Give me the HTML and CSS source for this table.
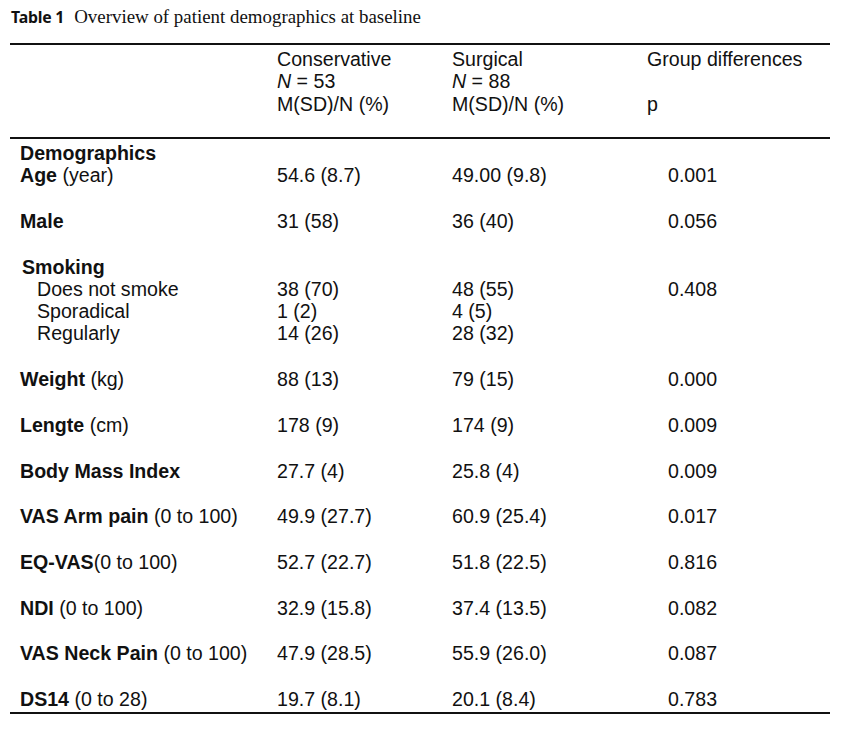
FILE: index.html
```html
<!DOCTYPE html>
<html>
<head>
<meta charset="utf-8">
<link rel="stylesheet" href="styles.css">
</head>
<body>
<div class="page">
  <div class="caption"><span class="cap-label">Table 1</span><span class="cap-text">Overview of patient demographics at baseline</span></div>
  <div class="tbl">
    <div class="head grid">
      <div></div>
      <div>Conservative<br><i>N</i> = 53<br>M(SD)/N (%)</div>
      <div>Surgical<br><i>N</i> = 88<br>M(SD)/N (%)</div>
      <div>Group differences<br>&nbsp;<br>p</div>
    </div>
    <div class="body">
      <div class="row grid first">
        <div><b>Demographics</b><br><b>Age</b> (year)</div>
        <div>&nbsp;<br>54.6 (8.7)</div>
        <div>&nbsp;<br>49.00 (9.8)</div>
        <div class="pv">&nbsp;<br>0.001</div>
      </div>
      <div class="row grid">
        <div><b>Male</b></div>
        <div>31 (58)</div>
        <div>36 (40)</div>
        <div class="pv">0.056</div>
      </div>
      <div class="row grid">
        <div><b class="smk">Smoking</b><br><span class="sub">Does not smoke</span><br><span class="sub">Sporadical</span><br><span class="sub">Regularly</span></div>
        <div>&nbsp;<br>38 (70)<br>1 (2)<br>14 (26)</div>
        <div>&nbsp;<br>48 (55)<br>4 (5)<br>28 (32)</div>
        <div class="pv">&nbsp;<br>0.408</div>
      </div>
      <div class="row grid">
        <div><b>Weight</b> (kg)</div>
        <div>88 (13)</div>
        <div>79 (15)</div>
        <div class="pv">0.000</div>
      </div>
      <div class="row grid">
        <div><b>Lengte</b> (cm)</div>
        <div>178 (9)</div>
        <div>174 (9)</div>
        <div class="pv">0.009</div>
      </div>
      <div class="row grid">
        <div><b>Body Mass Index</b></div>
        <div>27.7 (4)</div>
        <div>25.8 (4)</div>
        <div class="pv">0.009</div>
      </div>
      <div class="row grid">
        <div><b>VAS Arm pain</b> (0 to 100)</div>
        <div>49.9 (27.7)</div>
        <div>60.9 (25.4)</div>
        <div class="pv">0.017</div>
      </div>
      <div class="row grid">
        <div><b>EQ-VAS</b>(0 to 100)</div>
        <div>52.7 (22.7)</div>
        <div>51.8 (22.5)</div>
        <div class="pv">0.816</div>
      </div>
      <div class="row grid">
        <div><b>NDI</b> (0 to 100)</div>
        <div>32.9 (15.8)</div>
        <div>37.4 (13.5)</div>
        <div class="pv">0.082</div>
      </div>
      <div class="row grid">
        <div><b>VAS Neck Pain</b> (0 to 100)</div>
        <div>47.9 (28.5)</div>
        <div>55.9 (26.0)</div>
        <div class="pv">0.087</div>
      </div>
      <div class="row grid">
        <div><b>DS14</b> (0 to 28)</div>
        <div>19.7 (8.1)</div>
        <div>20.1 (8.4)</div>
        <div class="pv">0.783</div>
      </div>
    </div>
  </div>
</div>
</body>
</html>
```
FILE: styles.css
```css
html, body {
  margin: 0;
  padding: 0;
  background: #ffffff;
}
.page {
  padding: 6px 12px 0 10px;
  color: #111111;
}
.caption {
  display: flex;
  align-items: baseline;
  height: 22px;
  line-height: 22px;
  margin-bottom: 15px;
}
.cap-label {
  font-family: "Noto Sans", "Open Sans", sans-serif;
  font-weight: 700;
  font-size: 15.8px;
  margin-left: 1px;
  margin-right: 10px;
  letter-spacing: -0.2px;
}
.cap-text {
  font-family: "Liberation Serif", "Times New Roman", serif;
  font-size: 18.9px;
}
.tbl {
  width: 820px;
  border-top: 2px solid #111;
  border-bottom: 2px solid #111;
  font-family: "Liberation Sans", Arial, sans-serif;
  font-size: 19.6px;
  line-height: 22.3px;
}
.grid {
  display: grid;
  grid-template-columns: 257px 175px 195px 1fr;
  padding-left: 10px;
}
.head {
  padding-top: 3px;
  padding-bottom: 22px;
  border-bottom: 2px solid #111;
}
.body {
  padding-top: 3px;
  padding-bottom: 2px;
}
.row {
  margin-top: 23.4px;
}
.row.first {
  margin-top: 0;
}
.pv {
  padding-left: 21px;
}
.sub {
  padding-left: 17px;
}
.smk {
  padding-left: 2px;
}
b {
  font-weight: 700;
}
```
